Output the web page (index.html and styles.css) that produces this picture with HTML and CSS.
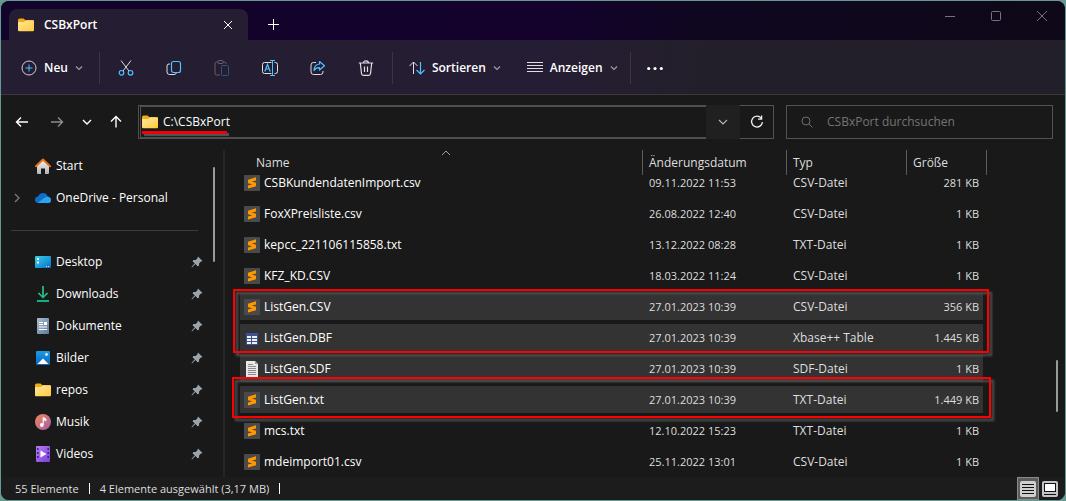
FILE: index.html
```html
<!DOCTYPE html>
<html lang="de">
<head>
  <meta charset="UTF-8" />
  <meta name="viewport" content="width=device-width, initial-scale=1.0"/>
  <title>CSBxPort</title>
  <link rel="stylesheet" href="styles.css">
</head>
<body>
  <!-- Shared icons -->
  <svg class="sprite" aria-hidden="true">
    <defs>
      <linearGradient id="folder-fill" x1="0" y1="0" x2="1" y2="1">
        <stop offset="0" stop-color="#ffe9a0"/><stop offset="1" stop-color="#ffc93c"/>
      </linearGradient>
      <linearGradient id="desk-fill" x1="0" y1="0" x2="1" y2="1">
        <stop offset="0" stop-color="#35d0ee"/><stop offset="1" stop-color="#0c6fc4"/>
      </linearGradient>
      <linearGradient id="down-fill" x1="0" y1="0" x2="0" y2="1">
        <stop offset="0" stop-color="#2fd08f"/><stop offset="1" stop-color="#14a583"/>
      </linearGradient>
      <linearGradient id="doc-fill" x1="0" y1="0" x2="1" y2="1">
        <stop offset="0" stop-color="#a9bed2"/><stop offset="1" stop-color="#5c7a99"/>
      </linearGradient>
      <linearGradient id="pic-fill" x1="0" y1="0" x2="0" y2="1">
        <stop offset="0" stop-color="#1c9be6"/><stop offset="1" stop-color="#0a66bd"/>
      </linearGradient>
      <linearGradient id="music-fill" x1="0" y1="0" x2="1" y2="1">
        <stop offset="0" stop-color="#f0895a"/><stop offset="1" stop-color="#a85aa8"/>
      </linearGradient>
      <linearGradient id="video-fill" x1="0" y1="0" x2="1" y2="1">
        <stop offset="0" stop-color="#b87cf5"/><stop offset="1" stop-color="#7b3fd8"/>
      </linearGradient>
      <linearGradient id="home-fill" x1="0" y1="0" x2="0" y2="1">
        <stop offset="0" stop-color="#f4f4f4"/><stop offset="1" stop-color="#b4b4b4"/>
      </linearGradient>
    </defs>
    <symbol id="folder" viewBox="0 0 16 16">
      <path d="M0 3.2Q0 1.5 1.5 1.5H5.5L7.5 3.2H14.5Q16 3.2 16 4.5V8H0Z" fill="#f2ab10"/>
      <path d="M0 6Q0 5 1 5H6L8 3.2H15Q16 3.2 16 4.2V13Q16 14.2 15 14.2H1Q0 14.2 0 13Z" fill="url(#folder-fill)"/>
    </symbol>
    <symbol id="subl" viewBox="0 0 16 16">
      <rect width="16" height="16" rx="1" fill="#4a4a4a"/>
      <path d="M12 2.2L4 4.8V8.2L8.3 9.3L4 10.5V13.6L12 11.2V7.8L7.8 6.6L12 5.4Z" fill="#ff9800"/>
    </symbol>
    <symbol id="pin" viewBox="0 0 12 12">
      <path d="M7 .5L11.5 5L9.7 5.7L8.2 7.3L8 9.6L6.9 10.5L4.4 8L1 11.4L.5 10.9L3.7 7.3L1.5 5.2L2.4 4.1L4.8 3.9L6.4 2.3Z" fill="#9aa4ac"/>
    </symbol>
    <symbol id="chev" viewBox="0 0 8 8">
      <path d="M1 2.5L4 5.5L7 2.5" fill="none" stroke="currentColor" stroke-width="1.2"/>
    </symbol>
  </svg>

  <div class="window">
    <header class="titlebar">
      <div class="tab">
        <svg class="icon"><use href="#folder"/></svg>
        <span class="tab-title">CSBxPort</span>
        <button class="tab-close" aria-label="Tab schließen">
          <svg width="10" height="10" viewBox="0 0 10 10"><path d="M1 1L9 9M9 1L1 9" fill="none" stroke="#fff"/></svg>
        </button>
      </div>
      <button class="tab-new" aria-label="Neuer Tab">
        <svg width="11" height="11" viewBox="0 0 11 11"><path d="M5.5 0V11M0 5.5H11" fill="none" stroke="#fff"/></svg>
      </button>
      <div class="window-buttons">
        <button aria-label="Minimieren"><svg width="10" height="10"><path d="M0 5.5H10" fill="none" stroke="#77727c"/></svg></button>
        <button aria-label="Maximieren"><svg width="10" height="10"><rect x=".5" y=".5" width="9" height="9" rx="1" fill="none" stroke="#77727c"/></svg></button>
        <button aria-label="Schließen"><svg width="10" height="10"><path d="M0 0L10 10M10 0L0 10" fill="none" stroke="#77727c"/></svg></button>
      </div>
    </header>

    <div class="toolbar">
      <button class="tool-text tool-new">
        <svg class="icon" viewBox="0 0 16 16" fill="none"><circle cx="8" cy="8" r="7" stroke="#d0ccd4"/><path d="M8 4.5V11.5M4.5 8H11.5" stroke="#4cc2ff"/></svg>
        Neu
        <svg class="chev"><use href="#chev"/></svg>
      </button>
      <span class="separator"></span>
      <div class="tool-group">
        <button class="tool" aria-label="Ausschneiden">
          <svg class="icon" viewBox="0 0 16 16" fill="none"><path d="M3 .5L11 11M13 .5L5 11" stroke="#e0dde3"/><circle cx="3.5" cy="12.8" r="2.3" stroke="#4cc2ff" stroke-width="1.2"/><circle cx="12.5" cy="12.8" r="2.3" stroke="#4cc2ff" stroke-width="1.2"/></svg>
        </button>
        <button class="tool" aria-label="Kopieren">
          <svg class="icon" viewBox="0 0 16 16" fill="none"><path d="M4 4H3Q1 4 1 6V12Q1 14.5 3.5 14.5H8Q10 14.5 10.3 13" stroke="#e0dde3"/><rect x="5.5" y="1.5" width="9" height="11" rx="2" stroke="#4cc2ff" stroke-width="1.2"/></svg>
        </button>
        <button class="tool" aria-label="Einfügen" disabled>
          <svg class="icon" viewBox="0 0 16 16" fill="none"><path d="M4 2H2.5Q1 2 1 3.5V13.5Q1 15 2.5 15H6M9 2H10.5Q12 2 12 3.5V4" stroke="#66606c"/><rect x="4" y=".5" width="5" height="3" rx="1" stroke="#66606c"/><rect x="7.5" y="5.5" width="7" height="10" rx="1" stroke="#2e5676"/></svg>
        </button>
        <button class="tool" aria-label="Umbenennen">
          <svg class="icon" viewBox="0 0 16 16" fill="none"><path d="M9.5 2.5H2.5Q.5 2.5 .5 4.5V11.5Q.5 13.5 2.5 13.5H9.5M12.5 2.5H13.5Q15.5 2.5 15.5 4.5V11.5Q15.5 13.5 13.5 13.5H12.5" stroke="#e0dde3"/><path d="M10.5 .5V15.5M8 .5H13M8 15.5H13" stroke="#4cc2ff"/><path d="M2.8 11.5L5.5 4.5L8.2 11.5M3.8 9H7.2" stroke="#4cc2ff" stroke-width="1.2"/></svg>
        </button>
        <button class="tool" aria-label="Freigeben">
          <svg class="icon" viewBox="0 0 16 16" fill="none"><path d="M6 2.5H3.5Q1 2.5 1 5V12Q1 14.5 3.5 14.5H10.5Q13 14.5 13 12V11" stroke="#e0dde3"/><path d="M9.5 1.5L14.5 5.8L9.5 10V7.7Q6 7.5 4 10.5Q4.3 4.6 9.5 4Z" stroke="#4cc2ff" stroke-width="1.2" stroke-linejoin="round"/></svg>
        </button>
        <button class="tool" aria-label="Löschen">
          <svg class="icon" viewBox="0 0 16 16" fill="none"><path d="M.8 3H15.2M5.5 3Q5.5 .8 8 .8Q10.5 .8 10.5 3M2.3 3L3.5 13.5Q3.7 15.3 5.3 15.3H10.7Q12.3 15.3 12.5 13.5L13.7 3M6.5 6.5V12M9.5 6.5V12" stroke="#e0dde3" stroke-width="1.2"/></svg>
        </button>
      </div>
      <span class="separator"></span>
      <button class="tool-text">
        <svg class="icon" viewBox="0 0 16 16" fill="none"><path d="M4.5 14V2M.5 6L4.5 2L8.5 6" stroke="#e0dde3"/><path d="M11.5 2V14M7.5 10L11.5 14L15.5 10" stroke="#4cc2ff" stroke-width="1.2"/></svg>
        Sortieren
        <svg class="chev"><use href="#chev"/></svg>
      </button>
      <button class="tool-text tool-view">
        <svg class="icon" viewBox="0 0 16 16"><path d="M0 2.5H16M0 5.5H16M0 8.5H16M0 11.5H16" stroke="#e0dde3"/></svg>
        Anzeigen
        <svg class="chev"><use href="#chev"/></svg>
      </button>
      <span class="separator"></span>
      <button class="tool" aria-label="Mehr anzeigen">
        <svg class="icon" viewBox="0 0 16 16" fill="#fff"><circle cx="1.7" cy="8.5" r="1.6"/><circle cx="8" cy="8.5" r="1.6"/><circle cx="14.3" cy="8.5" r="1.6"/></svg>
      </button>
    </div>

    <div class="navbar">
      <div class="nav-buttons">
        <button aria-label="Zurück"><svg width="14" height="12" viewBox="0 0 14 12" fill="none"><path d="M13 6H1.5M6 1.5L1.5 6L6 10.5" stroke="#fff" stroke-width="1.4"/></svg></button>
        <button aria-label="Vorwärts"><svg width="14" height="12" viewBox="0 0 14 12" fill="none"><path d="M1 6H12.5M8 1.5L12.5 6L8 10.5" stroke="#8c8c8c" stroke-width="1.4"/></svg></button>
        <button class="recent" aria-label="Zuletzt besucht"><svg width="10" height="8" viewBox="0 0 10 8" fill="none"><path d="M1 2L5 6L9 2" stroke="#fff" stroke-width="1.4"/></svg></button>
        <button aria-label="Nach oben"><svg width="12" height="13" viewBox="0 0 12 13" fill="none"><path d="M6 12.5V1.5M1 6.5L6 1.5L11 6.5" stroke="#fff" stroke-width="1.4"/></svg></button>
      </div>
      <div class="address">
        <label class="address-field">
          <svg class="icon"><use href="#folder"/></svg>
          <input type="text" value="C:\CSBxPort" aria-label="Adresse">
          <span class="underline"></span>
        </label>
        <button class="address-drop" aria-label="Verlauf"><svg width="10" height="8" viewBox="0 0 10 8" fill="none"><path d="M1 2L5 6L9 2" stroke="#b4b4b4" stroke-width="1.2"/></svg></button>
        <button class="address-reload" aria-label="Aktualisieren"><svg width="14" height="14" viewBox="0 0 14 14" fill="none"><path d="M11.2 3.2A5.4 5.4 0 1 0 12.4 7M11.6 .6V4.2H8" stroke="#f0f0f0" stroke-width="1.3"/></svg></button>
      </div>
      <label class="search">
        <svg width="12" height="12" viewBox="0 0 12 12" fill="none"><circle cx="5" cy="5" r="4" stroke="#6c6c6c"/><path d="M8 8L11.5 11.5" stroke="#6c6c6c"/></svg>
        <input type="text" placeholder="CSBxPort durchsuchen" aria-label="CSBxPort durchsuchen">
      </label>
    </div>

    <div class="content">
      <nav class="sidebar">
        <a class="place" href="#">
          <svg class="icon" viewBox="0 0 16 16"><path d="M2 7L8 1.8L14 7V15Q14 16 13 16H10V10.5H6V16H3Q2 16 2 15Z" fill="url(#home-fill)"/><path d="M1 8.2L8 1.5L15 8.2" fill="none" stroke="#e8701a" stroke-width="2" stroke-linecap="round" stroke-linejoin="round"/></svg>
          <span>Start</span>
        </a>
        <a class="place" href="#">
          <svg class="expand" viewBox="0 0 8 10"><path d="M2 1L6 5L2 9" fill="none" stroke="#777" stroke-width="1.4"/></svg>
          <svg class="icon" viewBox="0 0 16 16"><path d="M3.5 13Q0 13 0 9.8Q0 7 3 6.6Q4.5 3 8 3Q11.5 3 12.5 6.2Q16 6.8 16 9.8Q16 13 13 13Z" fill="#0f6cc9"/><path d="M3 12.6L10 7.6Q12 6.3 14 7.2Q16 8.2 16 10Q16 13 13 13H4Z" fill="#29a7ee"/></svg>
          <span>OneDrive - Personal</span>
        </a>
        <hr class="divider">
        <a class="place" href="#">
          <svg class="icon" viewBox="0 0 16 16"><rect y="2" width="16" height="12" rx="1" fill="url(#desk-fill)"/><path d="M2 4H4V6H2ZM2 7.5H4V9.5H2Z" fill="#fff"/><path d="M11 12.5H12M13 12.5H14" stroke="#cdf"/></svg>
          <span>Desktop</span>
          <svg class="pin"><use href="#pin"/></svg>
        </a>
        <a class="place" href="#">
          <svg class="icon" viewBox="0 0 16 16"><path d="M3.5 7L8 11.5L12.5 7" fill="none" stroke="url(#down-fill)" stroke-width="1.6"/><path d="M8 0V11" stroke="#2ccb90" stroke-width="1.6"/><rect x="2" y="14" width="12" height="2" fill="#17ad86"/></svg>
          <span>Downloads</span>
          <svg class="pin"><use href="#pin"/></svg>
        </a>
        <a class="place" href="#">
          <svg class="icon" viewBox="0 0 16 16"><rect x="2" width="12" height="16" rx="1" fill="url(#doc-fill)"/><path d="M4 4.5H8M4 6.5H8M4 9H12M4 11.5H12" stroke="#fff"/><rect x="9" y="4" width="3" height="3" fill="#fff"/></svg>
          <span>Dokumente</span>
          <svg class="pin"><use href="#pin"/></svg>
        </a>
        <a class="place" href="#">
          <svg class="icon" viewBox="0 0 16 16"><rect x="1" y="1" width="14" height="14" rx="1" fill="url(#pic-fill)"/><path d="M2.5 14L8 8.5L13.5 14Z" fill="#fff"/><circle cx="11.5" cy="4.5" r="1.4" fill="#d8efff"/></svg>
          <span>Bilder</span>
          <svg class="pin"><use href="#pin"/></svg>
        </a>
        <a class="place" href="#">
          <svg class="icon"><use href="#folder"/></svg>
          <span>repos</span>
          <svg class="pin"><use href="#pin"/></svg>
        </a>
        <a class="place" href="#">
          <svg class="icon" viewBox="0 0 16 16"><circle cx="8" cy="8" r="8" fill="url(#music-fill)"/><circle cx="6.8" cy="11" r="1.9" fill="#fff"/><path d="M8.1 11V3.5L11 5V6.8L9 5.8" fill="#fff" stroke="#fff" stroke-width=".9"/></svg>
          <span>Musik</span>
          <svg class="pin"><use href="#pin"/></svg>
        </a>
        <a class="place" href="#">
          <svg class="icon" viewBox="0 0 16 16"><rect x="1" width="14" height="16" rx="1" fill="url(#video-fill)"/><path d="M2.8 2V14M13.2 2V14" stroke="#44208c" stroke-width="1.6" stroke-dasharray="2 2"/><path d="M5.5 4.5L11.5 8L5.5 11.5Z" fill="#fff"/></svg>
          <span>Videos</span>
          <svg class="pin"><use href="#pin"/></svg>
        </a>
        <div class="scroll-thumb side-thumb"></div>
      </nav>

      <main class="files">
        <table>
          <thead>
            <tr>
              <th class="col-name">Name<svg class="sort" viewBox="0 0 10 6"><path d="M1 5L5 1L9 5" fill="none" stroke="#a0a0a0"/></svg></th>
              <th class="col-date">Änderungsdatum</th>
              <th class="col-type">Typ</th>
              <th class="col-size">Größe</th>
            </tr>
          </thead>
          <tbody>
            <tr class="cut-off">
              <td><svg class="icon"><use href="#subl"/></svg>CSBKundendatenImport.csv</td>
              <td class="num">09.11.2022 11:53</td><td>CSV-Datei</td><td class="num">281 KB</td>
            </tr>
            <tr>
              <td><svg class="icon"><use href="#subl"/></svg>FoxXPreisliste.csv</td>
              <td class="num">26.08.2022 12:40</td><td>CSV-Datei</td><td class="num">1 KB</td>
            </tr>
            <tr>
              <td><svg class="icon"><use href="#subl"/></svg>kepcc_221106115858.txt</td>
              <td class="num">13.12.2022 08:28</td><td>TXT-Datei</td><td class="num">1 KB</td>
            </tr>
            <tr>
              <td><svg class="icon"><use href="#subl"/></svg>KFZ_KD.CSV</td>
              <td class="num">18.03.2022 11:24</td><td>CSV-Datei</td><td class="num">1 KB</td>
            </tr>
            <tr class="selected">
              <td><svg class="icon"><use href="#subl"/></svg>ListGen.CSV</td>
              <td class="num">27.01.2023 10:39</td><td>CSV-Datei</td><td class="num">356 KB</td>
            </tr>
            <tr class="selected">
              <td><svg class="icon" viewBox="0 0 16 16"><rect x="2" y="3" width="12" height="12" fill="#3f5290"/><path d="M3 6H7V8H3ZM8 6H13V8H8ZM3 9H7V11H3ZM8 9H13V11H8ZM3 12H7V14H3ZM8 12H13V14H8Z" fill="#eef0f8"/></svg>ListGen.DBF</td>
              <td class="num">27.01.2023 10:39</td><td>Xbase++ Table</td><td class="num">1.445 KB</td>
            </tr>
            <tr class="selected">
              <td><svg class="icon" viewBox="0 0 16 16"><path d="M2 0H11L14 3V16H2Z" fill="#e8e8e8"/><path d="M4 3.5H9M4 5.5H12M4 7.5H12M4 9.5H12M4 11.5H12M4 13.5H12" stroke="#8c8c8c"/><path d="M11 0V3H14Z" fill="#999"/></svg>ListGen.SDF</td>
              <td class="num">27.01.2023 10:39</td><td>SDF-Datei</td><td class="num">1 KB</td>
            </tr>
            <tr class="selected">
              <td><svg class="icon"><use href="#subl"/></svg>ListGen.txt</td>
              <td class="num">27.01.2023 10:39</td><td>TXT-Datei</td><td class="num">1.449 KB</td>
            </tr>
            <tr>
              <td><svg class="icon"><use href="#subl"/></svg>mcs.txt</td>
              <td class="num">12.10.2022 15:23</td><td>TXT-Datei</td><td class="num">1 KB</td>
            </tr>
            <tr>
              <td><svg class="icon"><use href="#subl"/></svg>mdeimport01.csv</td>
              <td class="num">25.11.2022 13:01</td><td>CSV-Datei</td><td class="num">1 KB</td>
            </tr>
          </tbody>
        </table>
        <!-- Red markers over the exported files -->
        <div class="marker marker-top"></div>
        <div class="marker marker-bottom"></div>
        <div class="scroll-thumb file-thumb"></div>
      </main>
    </div>

    <footer class="statusbar">
      <span class="status">55 Elemente</span>
      <span class="status">4 Elemente ausgewählt (3,17 MB)</span>
      <div class="view-buttons">
        <button class="active" aria-label="Details"><svg class="icon" viewBox="0 0 16 16"><rect width="16" height="16" rx="2" fill="#d0d0d0"/><path d="M2 3.5H14M2 6.5H14M2 9.5H14M2 12.5H14" stroke="#111"/></svg></button>
        <button aria-label="Große Symbole"><svg class="icon" viewBox="0 0 16 16"><rect width="16" height="16" rx="2" fill="#c4c4c8"/><rect x="2.5" y="2.5" width="11" height="8" fill="#fff" stroke="#111"/><path d="M2 13.5H14" stroke="#111"/></svg></button>
      </div>
    </footer>
  </div>
</body>
</html>
```
FILE: styles.css
```css
* {
  box-sizing: border-box;
}

body {
  margin: 0;
  padding: 1px;
  height: 100vh;
  background-color: #669a90;
  font-family: "Open Sans", "Noto Sans", sans-serif;
  font-size: 12px;
  line-height: 16px;
  color: #fff;
}

button {
  display: flex;
  align-items: center;
  justify-content: center;
  margin: 0;
  padding: 0;
  border: 0;
  background: none;
  color: inherit;
  font: inherit;
}

input {
  flex: 1;
  min-width: 0;
  padding: 0;
  border: 0;
  outline: 0;
  background: none;
  color: inherit;
  font: inherit;
}

svg {
  display: block;
  flex: none;
}

.sprite {
  position: absolute;
  width: 0;
  height: 0;
}

.icon {
  width: 16px;
  height: 16px;
}

.window {
  display: flex;
  flex-direction: column;
  height: 100%;
  overflow: hidden;
  border-radius: 8px;
  background-color: #191919;
}

/* Title bar */
.titlebar {
  display: flex;
  flex: none;
  height: 39px;
  padding-left: 8px;
  background: linear-gradient(100deg, #12032a 0%, #14022c 52%, #0f0720 66%, #0f0818 100%);
}

.tab {
  display: flex;
  align-items: center;
  gap: 10px;
  width: 239px;
  margin-top: 8px;
  padding: 0 12px 0 9px;
  border-radius: 8px 8px 0 0;
  background-color: #251d31;
}

.tab-title {
  flex: 1;
  font-weight: 600;
}

.tab-close {
  width: 16px;
  height: 16px;
}

.tab-new {
  width: 50px;
  padding-top: 8px;
}

.window-buttons {
  display: flex;
  margin-left: auto;
}

.window-buttons button {
  width: 46px;
  height: 29px;
}

/* Command bar */
.toolbar {
  display: flex;
  flex: none;
  align-items: center;
  height: 55px;
  padding-top: 1px;
  border-bottom: 1px solid #3a3a3a;
  background: linear-gradient(100deg, #251d31 0%, #251d33 52%, #231f2a 66%, #231f2a 100%);
  font-weight: 600;
}

.tool-text {
  gap: 7px;
  padding: 0 12px 0 16px;
}

.tool-new {
  padding: 0 16px 0 20px;
}

.tool-view {
  padding-left: 14px;
}

.chev {
  width: 8px;
  height: 8px;
  color: #a09ca6;
}

.separator {
  width: 1px;
  height: 32px;
  background-color: #3a3444;
}

.tool-group {
  display: flex;
  margin: 0 2px;
}

.tool {
  width: 48px;
  height: 32px;
}

/* Address row */
.navbar {
  display: flex;
  flex: none;
  align-items: center;
  height: 55px;
  padding: 0 12px 2px 6px;
}

.nav-buttons {
  display: flex;
  gap: 5px;
  margin-right: 7px;
}

.nav-buttons button {
  width: 30px;
  height: 30px;
}

.nav-buttons .recent {
  width: 19px;
}

.address,
.search {
  display: flex;
  height: 34px;
}

.address {
  flex: 1;
  margin-right: 12px;
}

.address-field {
  position: relative;
  display: flex;
  flex: 1;
  align-items: center;
  gap: 5px;
  padding-left: 1px;
  border: 2px solid #4f4f4f;
  border-right: 0;
  border-left: 3px double #4f4f4f;
}

.underline {
  position: absolute;
  left: 1px;
  bottom: 3px;
  width: 85px;
  height: 3px;
  background-color: #f00008;
  box-shadow: 2px 2px 1px #555;
}

.address-drop {
  width: 34px;
  background-color: #202020;
}

.address-reload {
  width: 34px;
  border: 1px solid #535353;
  border-left: 0;
}

.search {
  align-items: center;
  gap: 14px;
  flex: 0 1 267px;
  padding-left: 14px;
  border: 1px solid #535353;
}

.search input::placeholder {
  color: #747474;
  opacity: 1;
}

/* Folder list on the left */
.content {
  display: flex;
  flex: 1;
  min-height: 0;
}

.sidebar {
  position: relative;
  flex: none;
  width: 224px;
  border-right: 2px solid #262626;
}

.place {
  position: relative;
  display: flex;
  align-items: center;
  gap: 5px;
  height: 32px;
  padding: 0 20px 0 34px;
  color: #fff;
  text-decoration: none;
}

.pin {
  width: 12px;
  height: 12px;
  margin-left: auto;
}

.expand {
  position: absolute;
  left: 12px;
  width: 8px;
  height: 10px;
}

.divider {
  height: 1px;
  margin: 16px 25px 15px 10px;
  border: 0;
  background-color: #3c3c3c;
}

.scroll-thumb {
  position: absolute;
  width: 2px;
  border-radius: 1px;
  background-color: #9a9a9a;
}

.side-thumb {
  top: 17px;
  right: 8px;
  height: 95px;
}

/* File table */
.files {
  position: relative;
  flex: 1;
  min-width: 0;
  padding: 0 78px 0 15px;
}

.file-thumb {
  top: 210px;
  right: 7px;
  height: 52px;
}

table {
  width: 100%;
  table-layout: fixed;
  border-spacing: 0;
}

th {
  position: relative;
  height: 25px;
  padding: 0 0 0 6px;
  border-right: 1px solid #5c5c5c;
  color: #dedede;
  font-weight: 400;
  text-align: left;
}

.col-name {
  padding-left: 16px;
}

.col-date {
  width: 144px;
}

.col-type {
  width: 120px;
}

.col-size {
  width: 80px;
}

.sort {
  position: absolute;
  top: 0;
  left: 50%;
  width: 10px;
  height: 6px;
}

td {
  height: 31px;
  padding: 0 6px;
  border: solid transparent;
  border-width: 2px 0;
  background-clip: padding-box;
  color: #dedede;
  white-space: nowrap;
}

td:first-child {
  padding-left: 4px;
  color: #fff;
}

td:last-child {
  padding-right: 4px;
  border-right-width: 4px;
  text-align: right;
}

td .icon {
  display: inline-block;
  margin-right: 4px;
  vertical-align: top;
}

.num {
  font-size: 11px;
}

/* First row is scrolled under the header */
.cut-off td {
  height: 23px;
  border-top: 0;
  vertical-align: top;
}

.selected td {
  background-color: #333;
}

.marker {
  position: absolute;
  border: 2px solid #f00;
  filter: drop-shadow(3px 3px 1px #555);
}

.marker-top {
  top: 139px;
  left: 8px;
  right: 76px;
  height: 64px;
}

.marker-bottom {
  top: 227px;
  left: 7px;
  right: 74px;
  height: 41px;
}

/* Status bar */
.statusbar {
  display: flex;
  flex: none;
  align-items: center;
  height: 23px;
  padding: 0 7px 0 14px;
  background-color: #1c1c1c;
  color: #dedede;
  font-size: 11px;
}

.status {
  padding-right: 10px;
  margin-right: 10px;
  border-right: 1px solid #fff;
  line-height: 11px;
}

.view-buttons {
  display: flex;
  gap: 3px;
  margin-left: auto;
}

.view-buttons button {
  height: 23px;
}

.view-buttons .active {
  width: 22px;
  border: 1px solid #8a8a8a;
  background-color: #5c5c5c;
}
```
